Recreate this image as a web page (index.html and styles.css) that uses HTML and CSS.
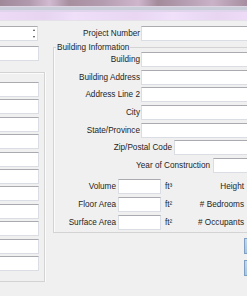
FILE: index.html
```html
<!DOCTYPE html>
<html>
<head>
<meta charset="utf-8">
<link rel="stylesheet" href="styles.css">
</head>
<body>
<div class="titlebar"></div>
<div class="frame-line"></div>
<div class="frame-a"></div>
<div class="frame-b"></div>
<main class="content">
  <section class="left">
    <div class="spin"><span class="spin-btns"><i class="up"></i><i class="down"></i></span></div>
    <div class="field left-field top-field"></div>
    <div class="left-group">
      <div class="field left-field"></div>
      <div class="field left-field"></div>
      <div class="field left-field"></div>
      <div class="field left-field"></div>
      <div class="field left-field"></div>
      <div class="field left-field"></div>
      <div class="field left-field"></div>
      <div class="field left-field"></div>
      <div class="field left-field"></div>
      <div class="field left-field"></div>
      <div class="field left-field"></div>
    </div>
  </section>
  <section class="right">
    <div class="row project"><span class="lbl w-main">Project Number</span><span class="field grow"></span></div>
    <fieldset class="info">
      <legend>Building Information</legend>
      <div class="row first"><span class="lbl w-in">Building</span><span class="field grow"></span></div>
      <div class="row"><span class="lbl w-in">Building Address</span><span class="field grow"></span></div>
      <div class="row"><span class="lbl w-in">Address Line 2</span><span class="field grow"></span></div>
      <div class="row"><span class="lbl w-in">City</span><span class="field grow"></span></div>
      <div class="row"><span class="lbl w-in">State/Province</span><span class="field grow"></span></div>
      <div class="row"><span class="lbl w-zip">Zip/Postal Code</span><span class="field grow gap2"></span></div>
      <div class="row"><span class="lbl w-year">Year of Construction</span><span class="field grow gap3"></span></div>
      <div class="row metric first-metric"><span class="lbl w-m">Volume</span><span class="field small"></span><span class="unit">ft³</span><span class="lbl w-r">Height</span><span class="field grow gap3"></span></div>
      <div class="row metric"><span class="lbl w-m">Floor Area</span><span class="field small"></span><span class="unit">ft²</span><span class="lbl w-r"># Bedrooms</span><span class="field grow gap3"></span></div>
      <div class="row metric"><span class="lbl w-m">Surface Area</span><span class="field small"></span><span class="unit">ft²</span><span class="lbl w-r"># Occupants</span><span class="field grow gap3"></span></div>
    </fieldset>
    <div class="buttons">
      <button class="btn" type="button"></button>
      <button class="btn" type="button"></button>
    </div>
  </section>
</main>
</body>
</html>
```
FILE: styles.css
```css
* { box-sizing: border-box; }
html, body {
  margin: 0;
  padding: 0;
}
body {
  width: 247px;
  height: 296px;
  overflow: hidden;
  background: #f0f0f0;
  font-family: "Liberation Sans", Arial, sans-serif;
  font-size: 8.2px;
  color: #1e1e1e;
}
.titlebar {
  height: 6px;
  background: linear-gradient(90deg, #9f8999 0%, #b29aae 12%, #d2bad2 20%, #a78f9f 28%, #b59db1 42%, #cfb6cd 56%, #a38b9b 64%, #b7a0b4 76%, #cab2c8 86%, #a68d9f 100%);
}
.frame-line { height: 1px; background: #ddd6e2; }
.frame-a { height: 3px; background: #c9cdd9; }
.frame-b {
  height: 10px;
  background: linear-gradient(90deg, #ecdaf7 0%, #e6d4f1 18%, #efdff9 30%, #e8d6f3 55%, #f0e0fa 70%, #e7d5f2 88%, #eddbf8 100%);
  border-top: 2px solid #dfd5ea;
}
.content {
  display: flex;
  width: 320px;
  border-top: 1px solid #e4e2e8;
}
.left {
  width: 45px;
  flex: none;
}
.right {
  width: 267px;
  margin-left: 8px;
  flex: none;
}
.field {
  display: block;
  height: 15px;
  background: #ffffff;
  border: 1px solid #dadde3;
  border-top-color: #a9abb0;
}
.spin {
  margin-top: 5px;
  width: 38px;
  height: 15px;
  background: #fff;
  border: 1px solid #dadde3;
  border-top-color: #a9abb0;
  border-left: none;
  display: flex;
  justify-content: flex-end;
}
.spin-btns {
  width: 4px;
  display: flex;
  flex-direction: column;
  justify-content: space-around;
  align-items: center;
  margin-right: 1px;
}
.spin-btns i {
  display: block;
  width: 0;
  height: 0;
  border-left: 1.5px solid transparent;
  border-right: 1.5px solid transparent;
}
.spin-btns .up { border-bottom: 2px solid #444; }
.spin-btns .down { border-top: 2px solid #444; }
.left-field {
  width: 39px;
  border-left: none;
  margin-top: 2.4px;
}
.top-field { margin-top: 5px; }
.left-group {
  margin-top: 11px;
  width: 45px;
  height: 210px;
  border: 1px solid #d3d3d3;
  border-left: none;
  box-shadow: inset 0 1px 0 #fbfbfb, 1px 0 0 #fbfbfb;
  padding-top: 6.6px;
}
.row {
  display: flex;
  align-items: center;
  height: 15px;
  margin-top: 2.7px;
  white-space: nowrap;
}
.row.project { margin-top: 5px; }
.row.first { margin-top: 0; }
.row.first-metric { margin-top: 6px; }
.lbl {
  display: block;
  text-align: right;
  flex: none;
}
.w-main { width: 87px; }
.w-in { width: 86px; }
.w-zip { width: 118px; }
.w-year { width: 156px; }
.w-m { width: 62px; }
.w-r { width: 59px; }
.grow {
  flex: 1;
  margin-left: 1px;
}
.gap2 { margin-left: 2px; }
.gap3 { margin-left: 3px; }
.small {
  width: 43px;
  margin-left: 2px;
  flex: none;
}
.unit {
  width: 20px;
  margin-left: 4px;
  flex: none;
}
.info {
  margin: 1px 0 0 0;
  padding: 0 0 2px 0;
  min-width: 0;
  border: 1px solid #d3d3d3;
  border-right: none;
  box-shadow: inset 1px 0 0 #fbfbfb;
}
.info legend {
  margin-left: 2px;
  padding: 0 1px;
  line-height: 10px;
  height: 10px;
  position: relative;
  top: 1px;
}
.buttons {
  margin-left: 191px;
  margin-top: 5px;
  display: flex;
  flex-direction: column;
  gap: 6px;
}
.btn {
  display: block;
  width: 20px;
  height: 16px;
  margin: 0;
  padding: 0;
  border: 1px solid #7f9fc3;
  background: linear-gradient(180deg, #c3d7ec, #a9c5e2);
}
```
